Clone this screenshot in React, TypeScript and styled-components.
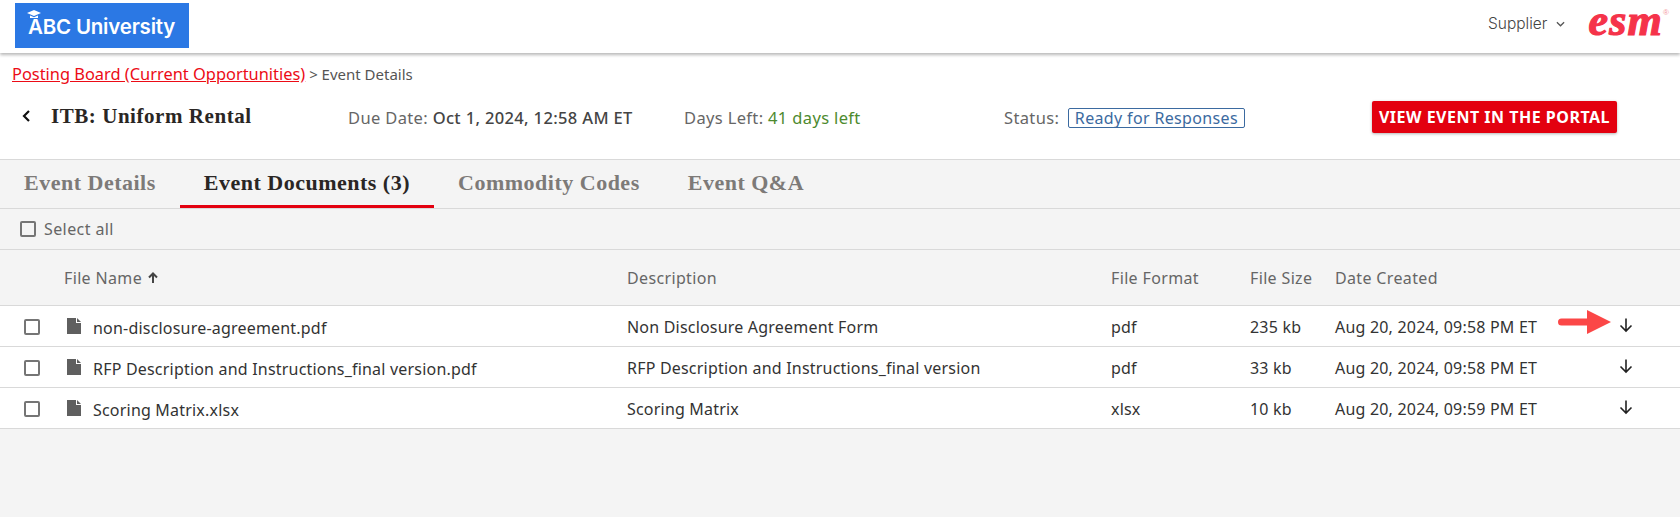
import React from "react";
import styled, { createGlobalStyle } from "styled-components";

const Global = createGlobalStyle`
  html, body { margin: 0; padding: 0; background: #f4f4f4; }
  body { font-family: "Noto Sans", "Open Sans", sans-serif; color: #333; }
`;
const Page = styled.div`width: 1680px; height: 517px; overflow: hidden; background: #f4f4f4;`;
const Header = styled.header`
  height: 53px; background: #fff; box-shadow: 0 2px 3px rgba(0,0,0,.28);
  display: flex; align-items: center; justify-content: space-between;
  padding: 0 10px 0 15px; position: relative; box-sizing: border-box;
`;
const Logo = styled.div`
  width: 174px; height: 45px; margin-top: -2px; background: #2b78e4; color: #fff; display: flex; align-items: center;
  padding: 2px 0 0 13px; box-sizing: border-box; font: 600 20.5px Inter, sans-serif; position: relative; letter-spacing: -.2px;
`;
const Cap = styled.svg`position: absolute; left: 12px; top: 7px;`;
const HeaderRight = styled.div`display: flex; align-items: center;`;
const Role = styled.div`font: 300 15.5px/22px Inter, sans-serif; color: #444; display: flex; align-items: center; gap: 9px; padding-bottom: 6px; white-space: nowrap;`;
const Esm = styled.div`
  font: italic 700 44px/50px "Liberation Serif", serif; color: #f5334a; margin-left: 23px; padding-bottom: 12px;
  letter-spacing: 1.2px; -webkit-text-stroke: 1.2px #f5334a; display: flex;
`;
const Reg = styled.span`font: 400 8px/10px "Liberation Sans", sans-serif; color: #f59aa4; margin-top: 12px; -webkit-text-stroke: 0;`;
const Summary = styled.section`background: #fff; height: 107px; box-sizing: border-box; border-bottom: 1px solid #d9d9d9; padding: 12px 12px 0;`;
const Crumbs = styled.div`font-size: 15px; line-height: 18px; color: #555;`;
const CrumbLink = styled.a`font-size: 16.4px; color: #ec0b16; text-decoration: underline;`;
const Meta = styled.div`display: flex; align-items: center; height: 24px; margin-top: 22px; font-size: 16.5px; letter-spacing: .35px; color: #666;`;
const Back = styled.svg`margin-left: 9px; margin-right: 20px; flex: none; position: relative; top: -1px;`;
const Title = styled.h1`width: 297px; margin: -2px 0 0; font: 700 21px "Liberation Serif", serif; letter-spacing: .55px; color: #2a2624; flex: none;`;
const MetaItem = styled.div<{ $w: number }>`width: ${p => p.$w}px; flex: none; white-space: nowrap;`;
const Strong = styled.span`font-weight: 500; color: #444;`;
const Green = styled.span`color: #4d8a2e;`;
const Badge = styled.span`border: 1px solid #3b6aa0; border-radius: 2px; color: #3b6aa0; padding: 0 6px; margin-left: 4px; font-size: 16px; letter-spacing: .35px; line-height: 18px; display: inline-block;`;
const Cta = styled.button`
  border: 0; height: 32px; width: 245px; background: #e3000f; color: #fff; border-radius: 2px; font: 700 16px "Noto Sans", sans-serif; letter-spacing: .5px;
  box-shadow: 0 1px 3px rgba(0,0,0,.3); flex: none; padding: 0;
`;
const Tabs = styled.nav`height: 48px; display: flex; border-bottom: 1px solid #d9d9d9;`;
const Tab = styled.div<{ $active?: boolean }>`
  box-sizing: border-box; height: 48px; padding: 0 24px; display: flex; align-items: center;
  font: 700 22px "Liberation Serif", serif; letter-spacing: .5px; color: ${p => p.$active ? "#2a2624" : "#7d7a78"};
  border-bottom: 3px solid ${p => p.$active ? "#e3000f" : "transparent"};
`;
const SelectAll = styled.div`height: 40px; display: flex; align-items: center; gap: 8px; padding-left: 20px; font-size: 16px; letter-spacing: .4px; color: #666; border-bottom: 1px solid #d9d9d9;`;
const Box = styled.span`width: 16px; height: 16px; box-sizing: border-box; display: block; border: 2px solid #757575; border-radius: 2px; background: #fff; flex: none;`;
const SelectBox = styled(Box)`background: transparent;`;
const Columns = "64px 563px 484px 139px 85px 1fr";
const HeadRow = styled.div`display: grid; grid-template-columns: ${Columns}; align-items: center; height: 56px; padding-top: 1px; box-sizing: border-box; font-size: 16px; letter-spacing: .35px; color: #666; border-bottom: 1px solid #d9d9d9;`;
const HeadName = styled.div`grid-column: 2; display: flex; align-items: center; gap: 5px;`;
const Row = styled.div`
  position: relative; display: grid; grid-template-columns: ${Columns}; align-items: center; height: 41px; box-sizing: border-box;
  background: #fff; border-bottom: 1px solid #d9d9d9; font-size: 16px; letter-spacing: .2px; color: #333; padding-top: 1px;
`;
const CheckCell = styled.div`padding-left: 24px;`;
const NameCell = styled.div`display: flex; align-items: center; gap: 12px; padding: 2px 0 0 3px;`;
const DocIcon = styled.svg`flex: none; position: relative; top: -2px;`;
const DateCell = styled.div`display: flex; align-items: center; justify-content: space-between; padding-right: 46px; white-space: nowrap;`;
const DownIcon = styled.svg`position: relative; top: -2px;`;
const Pointer = styled.svg`position: absolute; left: 1558px; top: 4px;`;

const rows = [
  ["non-disclosure-agreement.pdf", "Non Disclosure Agreement Form", "pdf", "235 kb", "Aug 20, 2024, 09:58 PM ET"],
  ["RFP Description and Instructions_final version.pdf", "RFP Description and Instructions_final version", "pdf", "33 kb", "Aug 20, 2024, 09:58 PM ET"],
  ["Scoring Matrix.xlsx", "Scoring Matrix", "xlsx", "10 kb", "Aug 20, 2024, 09:59 PM ET"],
];

const Down = () => (
  <DownIcon width="16" height="16" viewBox="0 0 16 16" fill="none" stroke="#222" strokeWidth="1.6"><path d="M8 1.5V14M2.5 8.5 8 14l5.5-5.5" /></DownIcon>
);

export default function App() {
  return (
    <Page>
      <Global />
      <Header>
        <Logo>
          <Cap width="14" height="10" viewBox="0 0 14 10" fill="#fff"><path d="M7 0 14 3 7 6 0 3Z" /><path d="M3 5.5 7 7.2l4-1.7V8H3Z" /></Cap>
          ABC University
        </Logo>
        <HeaderRight>
          <Role>
            <span>Supplier</span>
            <svg width="9" height="6" viewBox="0 0 10 6" fill="none" stroke="#555" strokeWidth="1.4"><path d="M1 1l4 4 4-4" /></svg>
          </Role>
          <Esm>esm<Reg>®</Reg></Esm>
        </HeaderRight>
      </Header>
      <Summary>
        <Crumbs><CrumbLink>Posting Board (Current Opportunities)</CrumbLink> &gt; Event Details</Crumbs>
        <Meta>
          <Back width="10" height="14" viewBox="0 0 10 14" fill="none" stroke="#111" strokeWidth="2.2"><path d="M8 2 3 7l5 5" /></Back>
          <Title>ITB: Uniform Rental</Title>
          <MetaItem $w={336}>Due Date: <Strong>Oct 1, 2024, 12:58 AM ET</Strong></MetaItem>
          <MetaItem $w={320}>Days Left: <Green>41 days left</Green></MetaItem>
          <MetaItem $w={368}>Status: <Badge>Ready for Responses</Badge></MetaItem>
          <Cta>VIEW EVENT IN THE PORTAL</Cta>
        </Meta>
      </Summary>
      <Tabs>
        <Tab>Event Details</Tab>
        <Tab $active>Event Documents (3)</Tab>
        <Tab>Commodity Codes</Tab>
        <Tab>Event Q&amp;A</Tab>
      </Tabs>
      <SelectAll><SelectBox />Select all</SelectAll>
      <HeadRow>
        <HeadName>File Name
          <svg width="12" height="12" viewBox="0 0 12 12" fill="none" stroke="#444" strokeWidth="2"><path d="M6 11V2M2 5.5 6 1.5l4 4" /></svg>
        </HeadName>
        <div>Description</div><div>File Format</div><div>File Size</div><div>Date Created</div>
      </HeadRow>
      {rows.map((r, i) => (
        <Row key={r[0]}>
          <CheckCell><Box /></CheckCell>
          <NameCell>
            <DocIcon width="14" height="16" viewBox="0 0 14 16" fill="#5f5f5f"><path d="M0 0h9v5h5v11H0ZM10 0l4 4h-4Z" /></DocIcon>
            {r[0]}
          </NameCell>
          <div>{r[1]}</div><div>{r[2]}</div><div>{r[3]}</div>
          <DateCell>{r[4]}<Down /></DateCell>
          {i === 0 && (
            <Pointer width="53" height="24" viewBox="0 0 53 24" fill="#fb4747"><path d="M3.5 8.5H29V0l24 12-24 12v-8.500H3.500a3.500 3.500 0 0 1 0-7Z" /></Pointer>
          )}
        </Row>
      ))}
    </Page>
  );
}
